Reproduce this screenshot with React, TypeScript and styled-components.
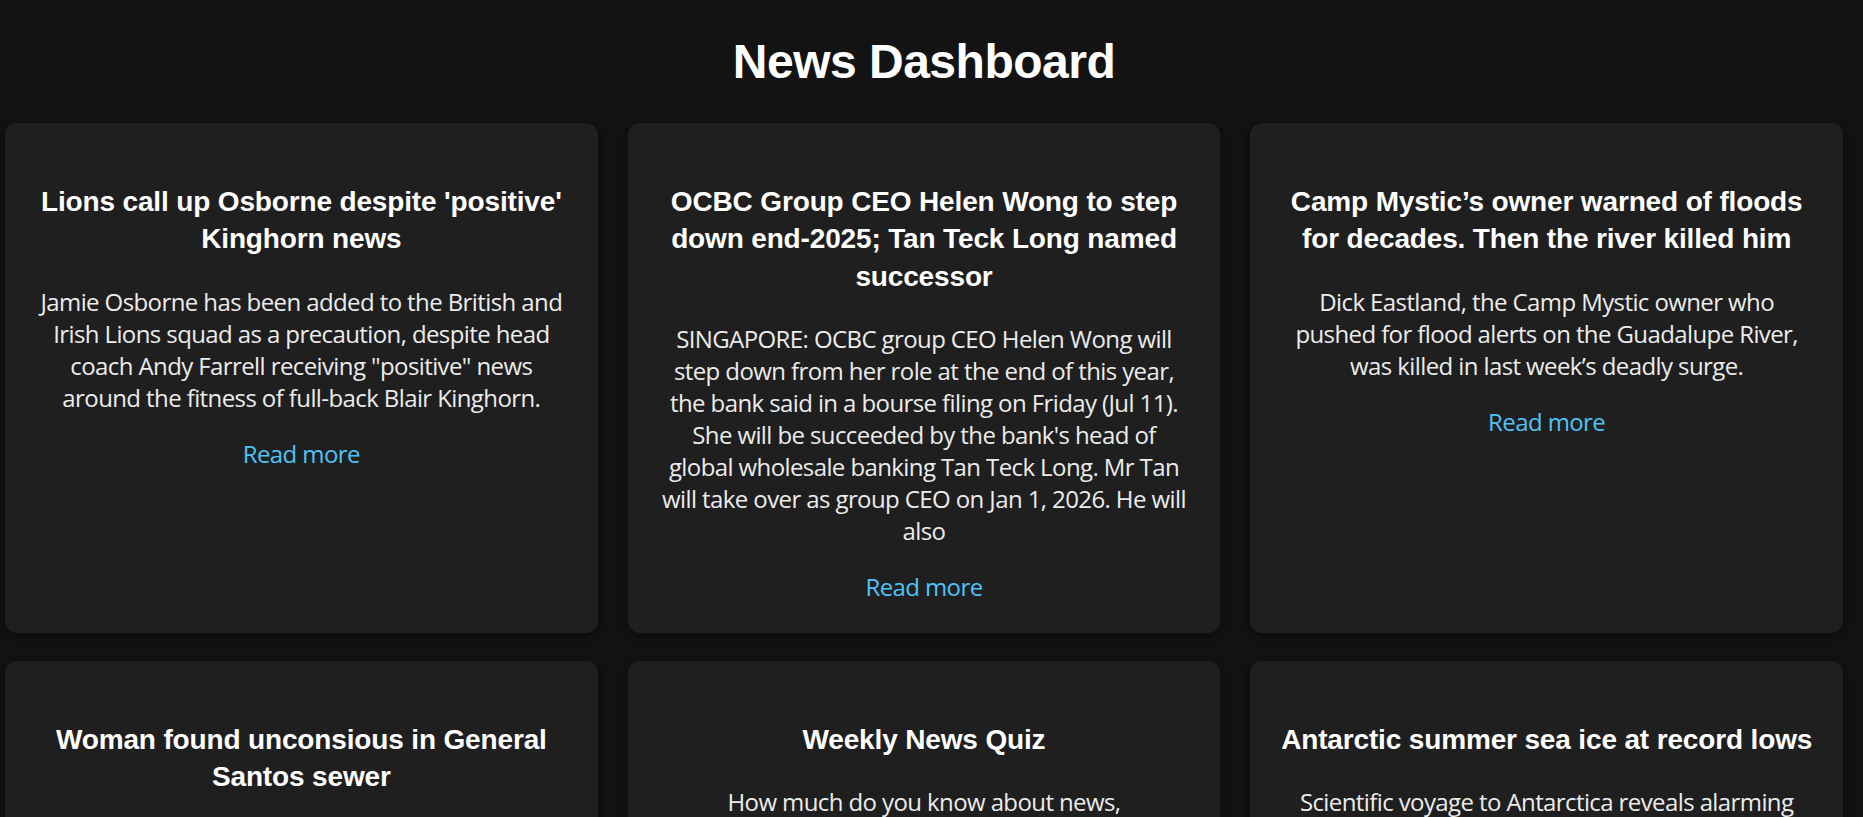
import React from "react";
import styled, { createGlobalStyle } from "styled-components";

const GlobalStyle = createGlobalStyle`
  html {
    scrollbar-width: none;
  }
  html::-webkit-scrollbar {
    display: none;
  }
  body {
    margin: 0;
    background: #131313;
    color: #ffffff;
    font-family: "Segoe UI", "Open Sans", "Liberation Sans", sans-serif;
  }
`;

const Page = styled.main`
  padding: 0 20px 40px 5px;
`;

const Heading = styled.h1`
  margin: 30px 0 29px;
  font-family: "Segoe UI", "Liberation Sans", Arial, sans-serif;
  font-size: 48px;
  line-height: 64px;
  font-weight: 700;
  letter-spacing: -0.5px;
  text-align: center;
  color: #ffffff;
`;

const Grid = styled.section`
  display: grid;
  grid-template-columns: repeat(3, 1fr);
  column-gap: 30px;
  row-gap: 28px;
`;

const Card = styled.article`
  background: #1f1f1f;
  border-radius: 12px;
  padding: 30px;
  text-align: center;
  box-shadow: 0 3px 12px rgba(0, 0, 0, 0.55);
`;

const Title = styled.h3`
  margin: 30px 0 28px;
  font-family: "Segoe UI", "Liberation Sans", Arial, sans-serif;
  font-size: 28px;
  line-height: 37.25px;
  font-weight: 700;
  letter-spacing: -0.15px;
  color: #ffffff;
`;

const Summary = styled.p`
  margin: 0 0 24px;
  font-size: 24px;
  line-height: 32px;
  letter-spacing: -0.6px;
  color: #ececec;
`;

const ReadMore = styled.a`
  font-size: 24px;
  line-height: 32px;
  letter-spacing: -0.6px;
  color: #4fc3f7;
  text-decoration: none;
`;

type Article = { title: string; summary: string };

const articles: Article[] = [
  {
    title: "Lions call up Osborne despite 'positive' Kinghorn news",
    summary:
      'Jamie Osborne has been added to the British and Irish Lions squad as a precaution, despite head coach Andy Farrell receiving "positive" news around the fitness of full-back Blair Kinghorn.',
  },
  {
    title:
      "OCBC Group CEO Helen Wong to step down end-2025; Tan Teck Long named successor",
    summary:
      "SINGAPORE: OCBC group CEO Helen Wong will step down from her role at the end of this year, the bank said in a bourse filing on Friday (Jul 11). She will be succeeded by the bank's head of global wholesale banking Tan Teck Long. Mr Tan will take over as group CEO on Jan 1, 2026. He will also",
  },
  {
    title: "Camp Mystic’s owner warned of floods for decades. Then the river killed him",
    summary:
      "Dick Eastland, the Camp Mystic owner who pushed for flood alerts on the Guadalupe River, was killed in last week’s deadly surge.",
  },
  {
    title: "Woman found unconsious in General Santos sewer",
    summary:
      "A woman was found unconscious inside a sewer in General Santos City and was rushed to a hospital by rescuers.",
  },
  {
    title: "Weekly News Quiz",
    summary:
      "How much do you know about news, entertainment and sport? Test yourself with this week's quiz.",
  },
  {
    title: "Antarctic summer sea ice at record lows",
    summary:
      "Scientific voyage to Antarctica reveals alarming changes in the extent of summer sea ice around the continent.",
  },
];

export default function App() {
  return (
    <>
      <GlobalStyle />
      <Page>
        <Heading>News Dashboard</Heading>
        <Grid>
          {articles.map((a) => (
            <Card key={a.title}>
              <Title>{a.title}</Title>
              <Summary>{a.summary}</Summary>
              <ReadMore href="#">Read more</ReadMore>
            </Card>
          ))}
        </Grid>
      </Page>
    </>
  );
}
